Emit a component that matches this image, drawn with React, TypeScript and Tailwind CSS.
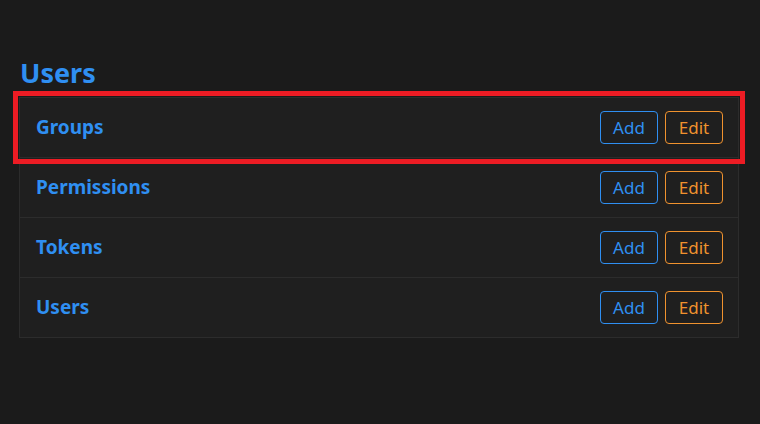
import React from "react";

const rows = ["Groups", "Permissions", "Tokens", "Users"];

export default function App() {
  return (
    <div
      className="w-[760px] h-[424px] bg-[#1b1b1b] pt-[53px] px-[19px]"
      style={{ fontFamily: '"Noto Sans", "Open Sans", sans-serif' }}
    >
      <h1 className="text-[27px] font-bold text-[#2f8ff2] leading-[40px] pl-[1px]">Users</h1>
      <div className="mt-[4px] w-[720px] border border-[#2c2c2c] bg-[#1f1f1f]">
        {rows.map((r, i) => (
          <div
            key={r}
            className={
              "flex items-center justify-between pl-[16px] pr-[15px] " +
              (i > 0 ? "h-[60px] border-t border-[#2c2c2c] " : "h-[59px] ") +
              (i === 0 ? "outline-[5px] outline-solid outline-[#ed1c24] outline-offset-[2px]" : "")
            }
          >
            <span className="text-[19px] font-bold text-[#2f8ff2] -mt-[1px]">{r}</span>
            <div className="flex gap-[7px]">
              <button className="w-[58px] h-[33px] rounded-[4px] border border-[#2f8ff2] text-[#2f8ff2] text-[17px] leading-none">
                Add
              </button>
              <button className="w-[58px] h-[33px] rounded-[4px] border border-[#f0922e] text-[#f0922e] text-[17px] leading-none">
                Edit
              </button>
            </div>
          </div>
        ))}
      </div>
    </div>
  );
}
